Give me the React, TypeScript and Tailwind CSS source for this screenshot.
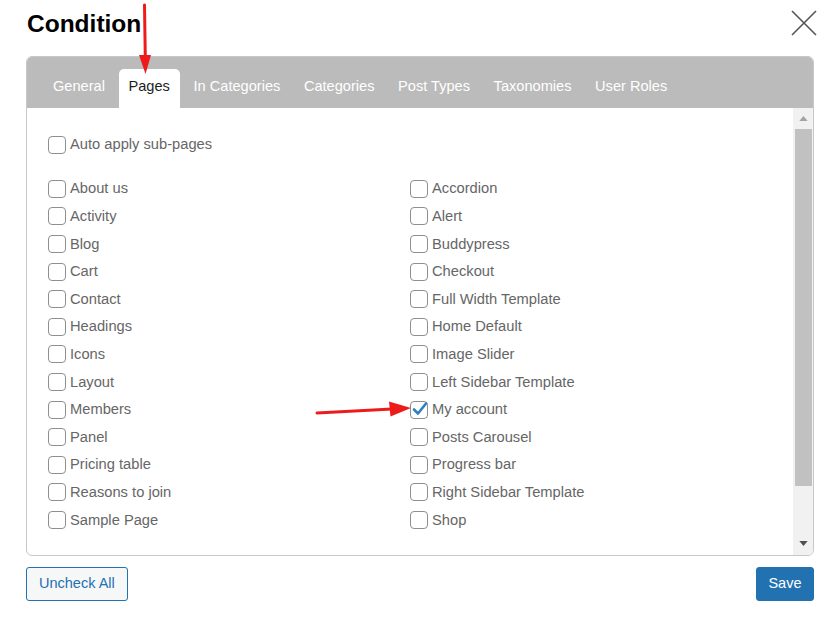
import { Fragment } from 'react';

const leftPages = [
  'About us',
  'Activity',
  'Blog',
  'Cart',
  'Contact',
  'Headings',
  'Icons',
  'Layout',
  'Members',
  'Panel',
  'Pricing table',
  'Reasons to join',
  'Sample Page',
];

const rightPages = [
  'Accordion',
  'Alert',
  'Buddypress',
  'Checkout',
  'Full Width Template',
  'Home Default',
  'Image Slider',
  'Left Sidebar Template',
  'My account',
  'Posts Carousel',
  'Progress bar',
  'Right Sidebar Template',
  'Shop',
];

const tabs = ['General', 'Pages', 'In Categories', 'Categories', 'Post Types', 'Taxonomies', 'User Roles'];

const CheckRow = ({ label, checked = false }: { label: string; checked?: boolean }) => (
  <label className="flex h-[27.6px] items-center">
    <span className="relative flex h-[18px] w-[18px] shrink-0 items-center justify-center rounded-[4px] border border-[#8c8f94] bg-white">
      {checked && (
        <svg viewBox="0 0 20 20" className="absolute -left-[1px] -top-[3px] h-[20px] w-[20px]">
          <path d="M4 10.5 L8 14.5 L16 4.5" fill="none" stroke="#2f7fc6" strokeWidth="2.6" strokeLinecap="round" strokeLinejoin="round" />
        </svg>
      )}
    </span>
    <span className="ml-[4px] text-[14.7px] leading-none text-[#666]">{label}</span>
  </label>
);

export default function App() {
  return (
    <div className="relative h-[624px] w-[828px] overflow-hidden bg-white font-['Liberation_Sans',Arial,sans-serif]">
      {/* header */}
      <div className="flex items-start justify-between pl-[27px] pr-[10px] pt-[9px]">
        <h1 className="text-[24.5px] font-bold leading-[30px] text-black">Condition</h1>
        <svg viewBox="0 0 28 28" className="h-[28px] w-[28px]">
          <path d="M2 2 L26 26 M26 2 L2 26" stroke="#555" strokeWidth="1.6" fill="none" />
        </svg>
      </div>

      {/* panel */}
      <div className="ml-[26px] mr-[14px] mt-[17px] flex h-[500px] flex-col overflow-hidden rounded-[6px] border border-[#c8c8c8]">
        <div className="flex h-[51px] shrink-0 items-end bg-[#bbbbbb] pl-[16px]">
          {tabs.map((t) => (
            <Fragment key={t}>
              <div
                className={
                  t === 'Pages'
                    ? 'mr-[3.6px] flex h-[39px] items-center rounded-t-[5px] bg-white px-[10px] pb-[4px] text-[14.6px] text-[#1d1d1d]'
                    : 'mr-[3.6px] flex h-[39px] items-center px-[10px] pb-[4px] text-[14.6px] text-white'
                }
              >
                {t}
              </div>
            </Fragment>
          ))}
        </div>

        <div className="flex min-h-0 flex-1">
          <div className="flex-1 pl-[21px] pt-[23px]">
            <CheckRow label="Auto apply sub-pages" />
            <div className="mt-[16.4px] grid w-[724px] grid-cols-2">
              <div className="flex flex-col">
                {leftPages.map((p) => (
                  <CheckRow key={p} label={p} />
                ))}
              </div>
              <div className="flex flex-col">
                {rightPages.map((p) => (
                  <CheckRow key={p} label={p} checked={p === 'My account'} />
                ))}
              </div>
            </div>
          </div>

          {/* scrollbar */}
          <div className="flex w-[20px] shrink-0 flex-col items-center bg-[#f1f1f1]">
            <div className="flex h-[21px] items-center justify-center">
              <svg viewBox="0 0 10 6" className="h-[5px] w-[9px]">
                <path d="M0 6 L5 0 L10 6 Z" fill="#a3a3a3" />
              </svg>
            </div>
            <div className="h-[357px] w-[17px] bg-[#c1c1c1]" />
            <div className="flex-1" />
            <div className="flex h-[24px] items-center justify-center">
              <svg viewBox="0 0 10 6" className="h-[5px] w-[9px]">
                <path d="M0 0 L10 0 L5 6 Z" fill="#505050" />
              </svg>
            </div>
          </div>
        </div>
      </div>

      {/* footer */}
      <div className="flex items-center justify-between pl-[26px] pr-[14px] pt-[11px]">
        <button className="h-[34px] rounded-[3px] border border-[#2271b1] bg-[#f6f7f7] px-[12px] text-[14.5px] text-[#2271b1]">
          Uncheck All
        </button>
        <button className="h-[34px] rounded-[3px] border border-[#2271b1] bg-[#2271b1] px-[11.5px] text-[14.5px] text-white">
          Save
        </button>
      </div>

      {/* annotation arrows */}
      <svg className="pointer-events-none absolute left-0 top-0" width="828" height="624" viewBox="0 0 828 624">
        <path d="M144.5 5 L145.3 58" stroke="#ee1b1b" strokeWidth="3" strokeLinecap="round" />
        <polygon points="139,55 151,55 145.5,74" fill="#ee1b1b" />
        <path d="M317 413 L392 409" stroke="#ee1b1b" strokeWidth="3" strokeLinecap="round" />
        <polygon points="389,401.5 390.5,416.5 411,408" fill="#ee1b1b" />
      </svg>
    </div>
  );
}
